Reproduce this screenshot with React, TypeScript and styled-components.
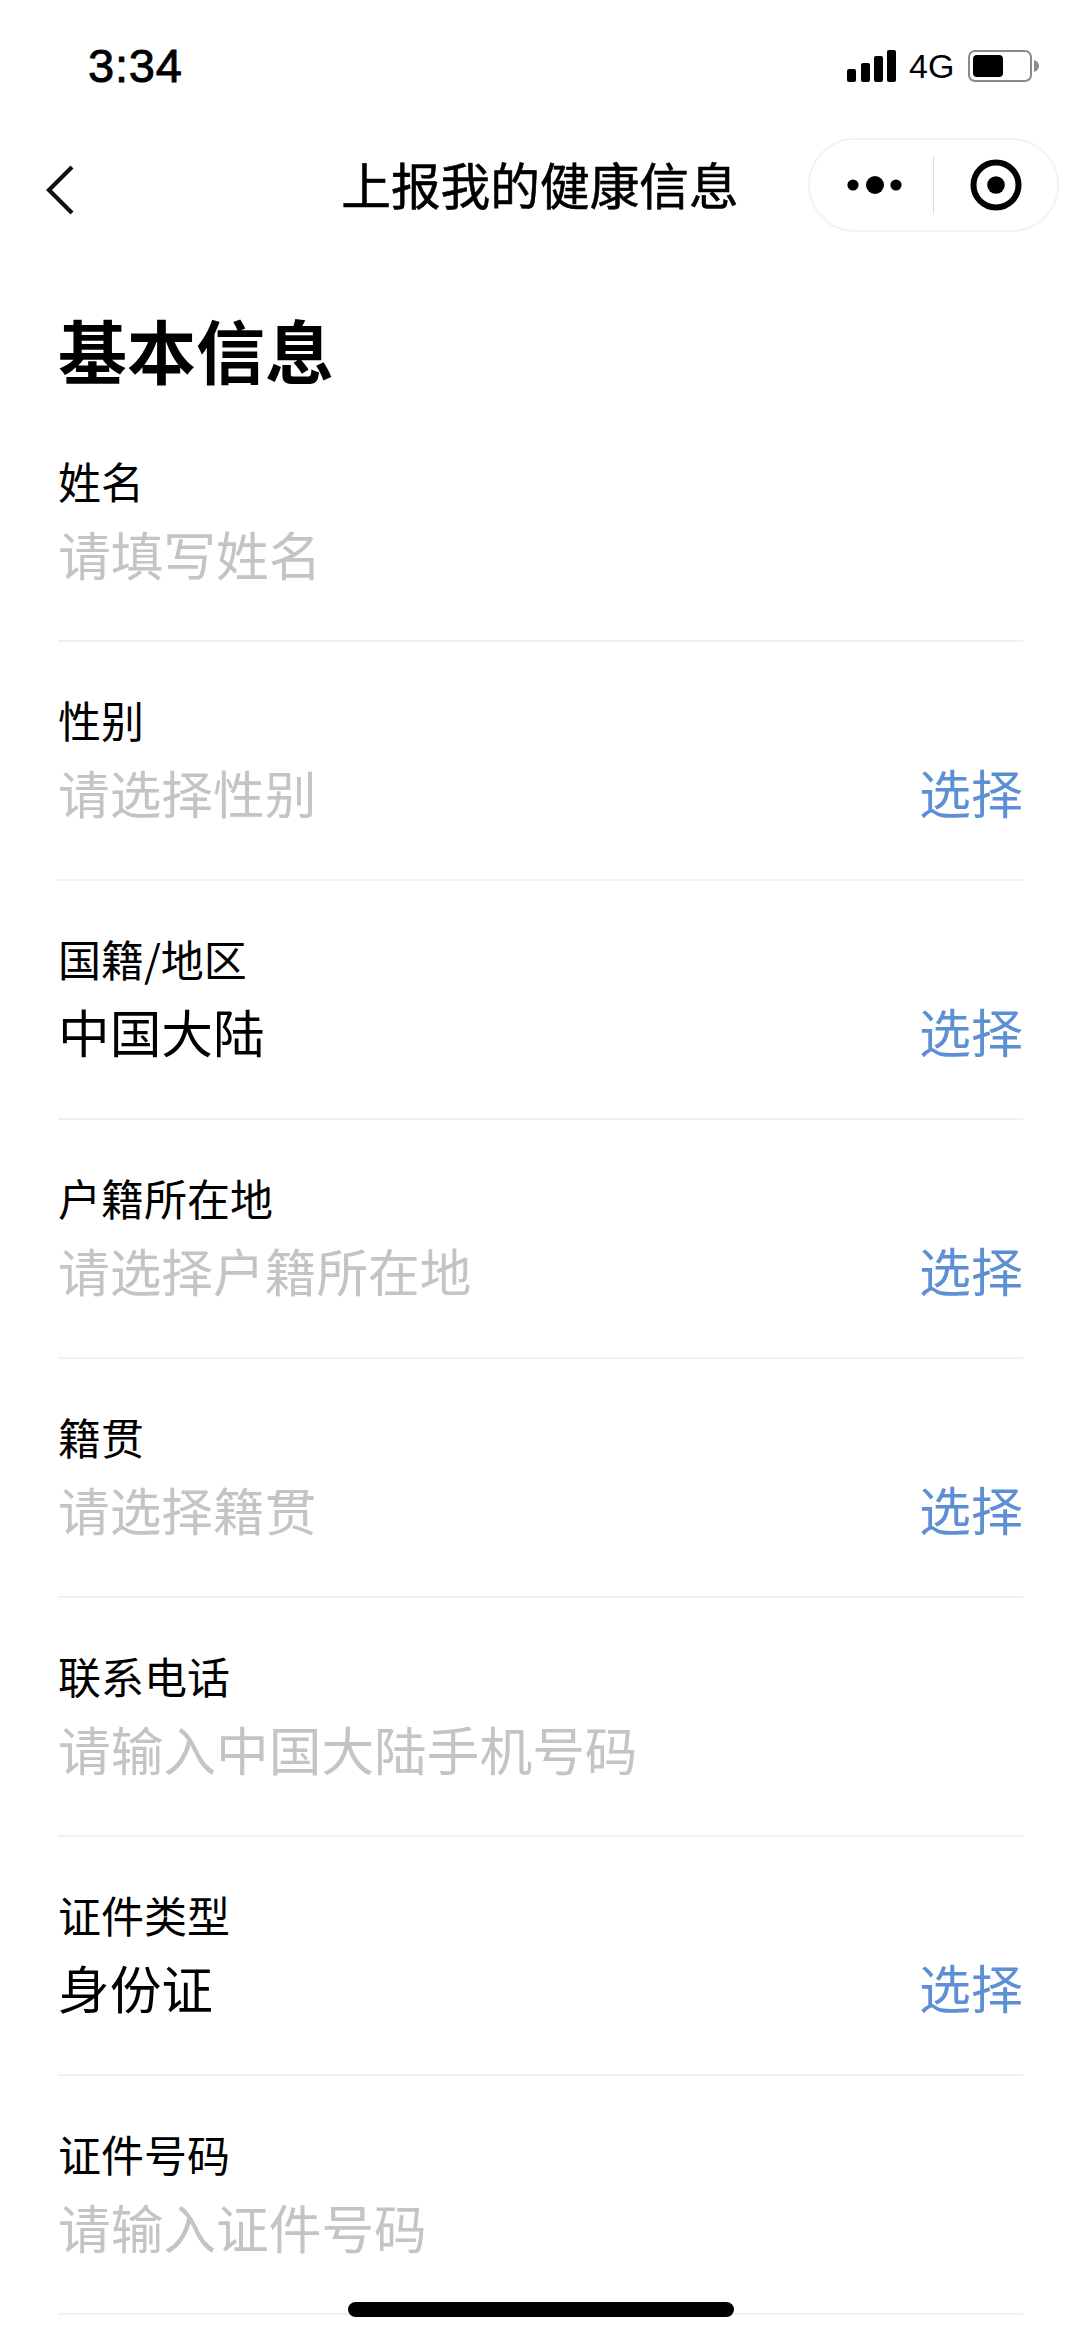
import styled, { createGlobalStyle } from "styled-components";

const GlobalStyle = createGlobalStyle`
  html, body {
    margin: 0;
    padding: 0;
    background: #ffffff;
  }
  * {
    box-sizing: border-box;
  }
`;

type Field = {
  label: string;
  value: string;
  filled?: boolean;
  selectable?: boolean;
};

const fields: Field[] = [
  { label: "姓名", value: "请填写姓名" },
  { label: "性别", value: "请选择性别", selectable: true },
  { label: "国籍/地区", value: "中国大陆", filled: true, selectable: true },
  { label: "户籍所在地", value: "请选择户籍所在地", selectable: true },
  { label: "籍贯", value: "请选择籍贯", selectable: true },
  { label: "联系电话", value: "请输入中国大陆手机号码" },
  { label: "证件类型", value: "身份证", filled: true, selectable: true },
  { label: "证件号码", value: "请输入证件号码" },
];

function App() {
  return (
    <Page>
      <GlobalStyle />
      <StatusBar>
        <Time>3:34</Time>
        <StatusRight>
          <svg width="50" height="32" viewBox="0 0 50 32">
            <rect x="0" y="19" width="9" height="13" rx="2" fill="#000" />
            <rect x="14" y="13" width="9" height="19" rx="2" fill="#000" />
            <rect x="27" y="6" width="9" height="26" rx="2" fill="#000" />
            <rect x="40" y="0" width="9" height="32" rx="2" fill="#000" />
          </svg>
          <Network>4G</Network>
          <svg width="71" height="32" viewBox="0 0 71 32">
            <rect x="1" y="1" width="62" height="30" rx="6" fill="none" stroke="#8a8a8a" strokeWidth="2" />
            <rect x="5" y="5" width="30" height="22" rx="4" fill="#000" />
            <path d="M66 10 C69 11 71 13 71 16 C71 19 69 21 66 22 Z" fill="#8a8a8a" />
          </svg>
        </StatusRight>
      </StatusBar>
      <NavBar>
        <BackButton>
          <svg width="30" height="50" viewBox="0 0 30 50">
            <path d="M27 2 L4 25 L27 48" fill="none" stroke="#111" strokeWidth="4.2" />
          </svg>
        </BackButton>
        <NavTitle>上报我的健康信息</NavTitle>
        <Capsule>
          <svg width="60" height="20" viewBox="0 0 60 20">
            <circle cx="6" cy="10" r="5.6" fill="#000" />
            <circle cx="28" cy="10" r="9" fill="#000" />
            <circle cx="49" cy="10" r="5.6" fill="#000" />
          </svg>
          <CapsuleDivider />
          <svg width="52" height="52" viewBox="0 0 52 52">
            <circle cx="26" cy="26" r="22.5" fill="none" stroke="#000" strokeWidth="6" />
            <circle cx="26" cy="26" r="8.8" fill="#000" />
          </svg>
        </Capsule>
      </NavBar>
      <SectionTitle>基本信息</SectionTitle>
      <Form>
        {fields.map((field) => (
          <Row key={field.label}>
            <Label>{field.label}</Label>
            <ValueLine>
              <Value $filled={field.filled} $selectable={field.selectable}>
                {field.value}
              </Value>
              {field.selectable && <SelectLink>选择</SelectLink>}
            </ValueLine>
          </Row>
        ))}
      </Form>
      <HomeBar />
    </Page>
  );
}

export default App;

const cjk = `"Noto Sans CJK SC", "Liberation Sans", sans-serif`;

const Page = styled.div`
  position: relative;
  width: 1080px;
  height: 2339px;
  overflow: hidden;
  background: #ffffff;
  color: #000000;
  font-family: ${cjk};
`;

const StatusBar = styled.div`
  display: flex;
  align-items: center;
  justify-content: space-between;
  height: 132px;
  padding: 0 41px 0 88px;
`;

const Time = styled.div`
  font-family: "Liberation Sans", sans-serif;
  font-size: 47px;
  font-weight: 400;
  letter-spacing: 0.8px;
  padding-bottom: 2px;
  -webkit-text-stroke: 0.9px #000;
`;

const StatusRight = styled.div`
  display: flex;
  align-items: center;
  gap: 14px;
`;

const Network = styled.div`
  font-family: "Liberation Sans", sans-serif;
  font-size: 34px;
  line-height: 32px;
  width: 45px;
  margin-left: -2px;
`;

const NavBar = styled.div`
  display: grid;
  grid-template-columns: 1fr auto 1fr;
  align-items: center;
  height: 106px;
`;

const BackButton = styled.div`
  display: flex;
  margin: 10px 0 0 45px;
`;

const NavTitle = styled.div`
  font-size: 49.7px;
  line-height: 60px;
  white-space: nowrap;
  padding-bottom: 5px;
  -webkit-text-stroke: 0.6px #000;
`;

const Capsule = styled.div`
  justify-self: end;
  display: flex;
  align-items: center;
  width: 251px;
  height: 94px;
  margin-right: 21px;
  padding-left: 37px;
  border: 2px solid #f3f3f3;
  border-radius: 47px;
  svg:last-child {
    margin-left: 36px;
  }
`;

const CapsuleDivider = styled.div`
  width: 1px;
  height: 58px;
  margin-left: 26px;
  background: #dddddd;
`;

const SectionTitle = styled.h1`
  margin: 0;
  padding: 75px 0 18px 58px;
  font-size: 69px;
  line-height: 72px;
  font-weight: 700;
`;

const Form = styled.div`
  display: flex;
  flex-direction: column;
  padding: 0 57px 0 58px;
`;

const Row = styled.div`
  display: flex;
  flex-direction: column;
  height: 239px;
  padding-top: 51px;
  border-bottom: 2px solid #f1f1f3;
`;

const Label = styled.div`
  font-size: 43px;
  line-height: 52px;
  white-space: nowrap;
`;

const ValueLine = styled.div`
  display: flex;
  align-items: center;
  justify-content: space-between;
  margin-top: 17px;
`;

const Value = styled.div<{ $filled?: boolean; $selectable?: boolean }>`
  font-size: ${(p) => (p.$selectable ? 51.7 : 52.7)}px;
  line-height: 60px;
  color: ${(p) => (p.$filled ? "#000000" : "#c4c4c7")};
  white-space: nowrap;
`;

const SelectLink = styled.div`
  font-size: 52px;
  line-height: 60px;
  color: #5c8fd3;
`;

const HomeBar = styled.div`
  position: absolute;
  left: 348px;
  top: 2302px;
  width: 386px;
  height: 15px;
  border-radius: 8px;
  background: #000000;
`;
